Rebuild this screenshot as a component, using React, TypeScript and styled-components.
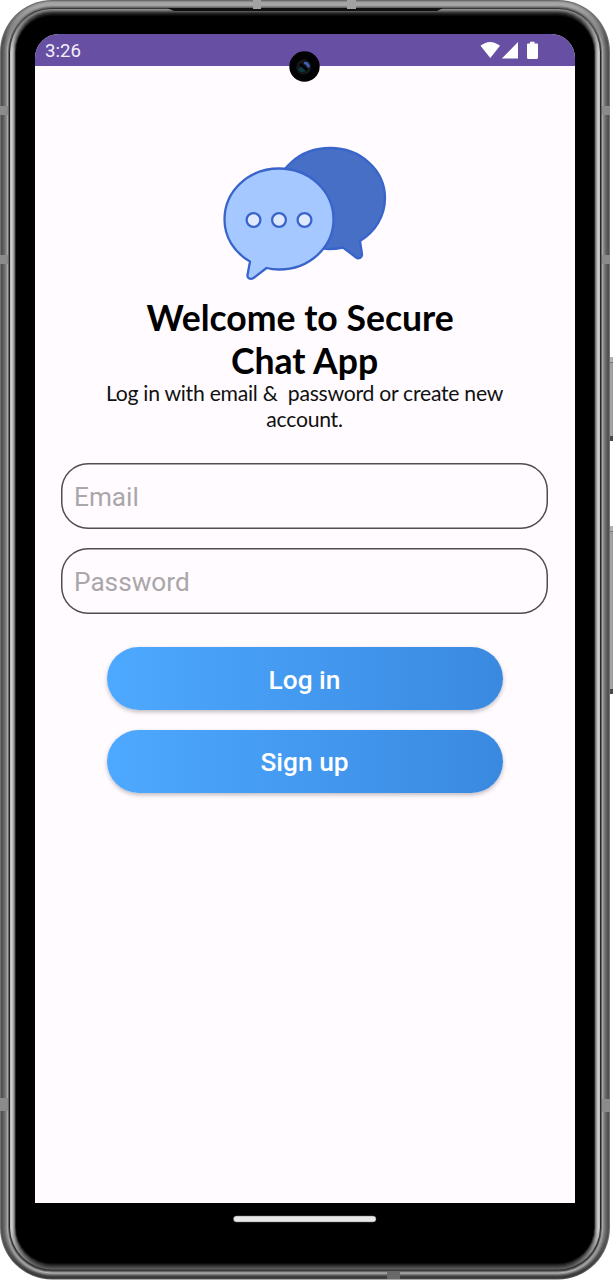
import React from 'react';
import styled, { createGlobalStyle } from 'styled-components';

const GlobalStyle = createGlobalStyle`
  *, *::before, *::after { box-sizing: border-box; }
  html, body { margin: 0; padding: 0; background: #fff; }
  body { width: 613px; height: 1280px; overflow: hidden; }
`;

const Stage = styled.div`
  position: relative;
  width: 613px;
  height: 1280px;
  overflow: hidden;
  padding: 34px 38.5px 0 34.5px;
`;

const FrameArt = styled.svg`
  position: absolute;
  inset: 0;
  z-index: 0;
`;

const Screen = styled.main`
  position: relative;
  z-index: 1;
  width: 540px;
  height: 1169px;
  display: flex;
  flex-direction: column;
  background: #fffbff;
  border-radius: 24px 24px 0 0;
`;

const StatusBar = styled.header`
  flex: none;
  height: 32px;
  display: flex;
  align-items: center;
  padding: 2px 35px 0 10.5px;
  background: #6750a4;
  border-radius: 24px 24px 0 0;
`;

const Clock = styled.span`
  flex: 1;
  font: 400 18.6px/22px Roboto, sans-serif;
  color: #f3effa;
`;

const StatusIcons = styled.svg`
  display: block;
`;

const Camera = styled.svg`
  position: absolute;
  left: 254px;
  top: 17px;
`;

const Content = styled.section`
  display: flex;
  flex-direction: column;
  align-items: center;
  padding: 78px 26px 0;
`;

const Logo = styled.svg`
  display: block;
`;

const Title = styled.h1`
  width: 397px;
  margin: 14px 0 0;
  text-align: center;
  font: 700 35.6px/43px Lato, sans-serif;
  color: #000;
`;

const Subtitle = styled.p`
  width: 410px;
  margin: -1px 0 0;
  text-align: center;
  font: 400 21.2px/25.5px Lato, sans-serif;
  letter-spacing: -0.27px;
  color: #111;
`;

const Form = styled.form`
  width: 487px;
  margin-top: 31px;
  display: flex;
  flex-direction: column;
  align-items: center;
  gap: 19px;
`;

const Field = styled.input`
  width: 100%;
  height: 66px;
  padding: 2px 13px 0;
  border: 0;
  border-radius: 27px;
  box-shadow: inset 0 0 0 1.5px #504c50;
  background: transparent;
  outline: none;
  font: 400 26.2px/32px Roboto, sans-serif;
  color: #222;
  &::placeholder { color: #aaa7aa; opacity: 1; }
`;

const Actions = styled.div`
  margin-top: 14px;
  display: flex;
  flex-direction: column;
  gap: 19.5px;
`;

const PillButton = styled.button`
  width: 396px;
  height: 63px;
  padding: 2px 0 0;
  border: 0;
  border-radius: 32px;
  background: linear-gradient(90deg, #4da9ff, #3a89e0);
  box-shadow: 0 2px 4px rgba(0, 0, 0, 0.26);
  font: 500 26.3px/32px Roboto, sans-serif;
  color: #fff;
`;

/* One entry per pixel of the metal rim, outermost first: [sides, top, bottom]. */
const rim: [string, string, string][] = [
  ['#707070', '#6c6c6c', '#555555'],
  ['#505050', '#8c8c8c', '#353535'],
  ['#555555', '#a0a0a0', '#3a3a3a'],
  ['#606060', '#a6a6a6', '#484848'],
  ['#6c6c6c', '#a8a8a8', '#666666'],
  ['#7a7a7a', '#a0a0a0', '#8c8c8c'],
  ['#8c8c8c', '#868686', '#b0b0b0'],
  ['#a8a8a8', '#666666', '#858585'],
  ['#666666', '#383838', '#4a4a4a'],
  ['#262626', '#8a8a8a', '#303030'],
  ['#bcbcbc', '#747474', '#626262'],
  ['#cccccc', '#555555', '#505050'],
  ['#bebebe', '#383838', '#424242'],
  ['#9a9a9a', '#242424', '#343434'],
  ['#737373', '#151515', '#242424'],
  ['#252525', '#0a0a0a', '#161616'],
];

function PhoneFrame() {
  return (
    <FrameArt width="613" height="1280" viewBox="0 0 613 1280">
      <defs>
        {rim.map(([side, top, bottom], i) => (
          <linearGradient key={i} id={`rim${i}`} gradientUnits="userSpaceOnUse" x1="0" y1="0" x2="0" y2="1280">
            <stop offset={(i + 2) / 1280} stopColor={top} />
            <stop offset={(i + 38) / 1280} stopColor={side} />
            <stop offset={(1242 - i) / 1280} stopColor={side} />
            <stop offset={(1278 - i) / 1280} stopColor={bottom} />
          </linearGradient>
        ))}
        <linearGradient id="key" x1="0" x2="1">
          <stop offset="0" stopColor="#777" />
          <stop offset="0.5" stopColor="#aaa" />
          <stop offset="1" stopColor="#888" />
        </linearGradient>
      </defs>
      {[[357, 84], [526, 168]].map(([y, h]) => (
        <g key={y}>
          <rect x="608" y={y} width="6" height={h} rx="1" fill="url(#key)" />
          <rect x="608" y={y} width="6" height="5" fill="#b0b0b0" />
          <rect x="608" y={y + 5} width="6" height="1" fill="#777" />
          <rect x="608" y={y + h - 5} width="6" height="5" fill="#484848" />
        </g>
      ))}
      {rim.map((_, i) => (
        <rect
          key={i}
          x={i}
          y={i}
          width={610 - 2 * i}
          height={1279.5 - 2 * i}
          rx={52 - i}
          fill={`url(#rim${i})`}
        />
      ))}
      <rect x="16" y="16" width="578" height="1247.5" rx="36" fill="#000" />
      <path d="M167 8H443L437 11H174Z" fill="#101010" />
      <g fill="#8b8b8b">
        <rect x="0" y="106" width="8" height="9" />
        <rect x="0" y="255" width="8" height="9" />
        <rect x="0" y="1098" width="8" height="13" />
        <rect x="602" y="106" width="8" height="9" />
        <rect x="602" y="255" width="8" height="9" />
        <rect x="602" y="1099" width="8" height="13" />
        <rect x="253" y="0" width="8" height="9" fill="#a2a2a2" />
        <rect x="347" y="0" width="9" height="9" fill="#a2a2a2" />
        <rect x="387" y="1272" width="13" height="7" fill="#696969" />
      </g>
      <rect x="233.5" y="1216" width="142.5" height="6" rx="3" fill="#e9e9e9" stroke="#777" strokeWidth="0.5" />
    </FrameArt>
  );
}

function ChatLogo() {
  return (
    <Logo width="166" height="138" viewBox="222 144 166 138">
      <g stroke="#3965cb" strokeWidth="2.3" strokeLinejoin="round">
        <path
          d="M330 148C360.500 148 385 170 385 198C385 216 375.500 231.500 360 241L362 254C362.500 258 358.500 259.500 355.500 257L343 247.500C338 248.500 334 249 329 249C299 249 275 226 275 198C275 170 299.500 148 330 148Z"
          fill="#476fc6"
        />
        <path
          d="M279 168.500C309.500 168.500 333.500 191 333.500 219.500C333.500 247 309.500 269.500 279 269.500C274.500 269.500 270.500 269 266.500 268L253.500 278C250.500 280 247 278.500 247.500 275L250 261.500C234 252.500 224.500 237 224.500 219.500C224.500 191 248.500 168.500 279 168.500Z"
          fill="#a4c8ff"
        />
        {[253.5, 279, 304.5].map((cx) => (
          <circle key={cx} cx={cx} cy="220" r="6.900" fill="#dfe9fb" />
        ))}
      </g>
    </Logo>
  );
}

export default function App() {
  return (
    <>
      <GlobalStyle />
      <Stage>
        <PhoneFrame />
        <Screen>
          <StatusBar>
            <Clock>3:26</Clock>
            <StatusIcons width="60" height="20" viewBox="480 40.500 60 20" fill="#fff">
              <path d="M480.500 45.300Q490 37.500 500 45.300L490.300 57.500Z" />
              <path d="M518 41.500V58H501.800Z" />
              <path d="M530 41.300H534.500V43H537Q538 43 538 44V57Q538 58.500 536.500 58.500H528.500Q527 58.500 527 57V44Q527 43 528 43H530Z" />
            </StatusIcons>
          </StatusBar>
          <Camera width="31" height="31" viewBox="0 0 31 31">
            <circle cx="15.500" cy="15.500" r="15.200" fill="#020204" />
            <circle cx="14.700" cy="16" r="7.500" fill="#15171b" />
            <ellipse cx="13" cy="18.500" rx="3.500" ry="2.500" fill="#0b3a40" />
            <path d="M15 11Q20 10 21 16L19 17Q17 13 15 13Z" fill="#3f60b0" />
            <path d="M11 13L18 19" stroke="#010104" strokeWidth="2.500" />
          </Camera>
          <Content>
            <ChatLogo />
            <Title>
              Welcome to Secure&nbsp;
              <br />
              Chat App
            </Title>
            <Subtitle>
              Log in with email &amp;&nbsp; password or create new account.
            </Subtitle>
            <Form onSubmit={(e) => e.preventDefault()}>
              <Field type="email" placeholder="Email" />
              <Field type="password" placeholder="Password" />
              <Actions>
                <PillButton type="submit">Log in</PillButton>
                <PillButton type="button">Sign up</PillButton>
              </Actions>
            </Form>
          </Content>
        </Screen>
      </Stage>
    </>
  );
}
